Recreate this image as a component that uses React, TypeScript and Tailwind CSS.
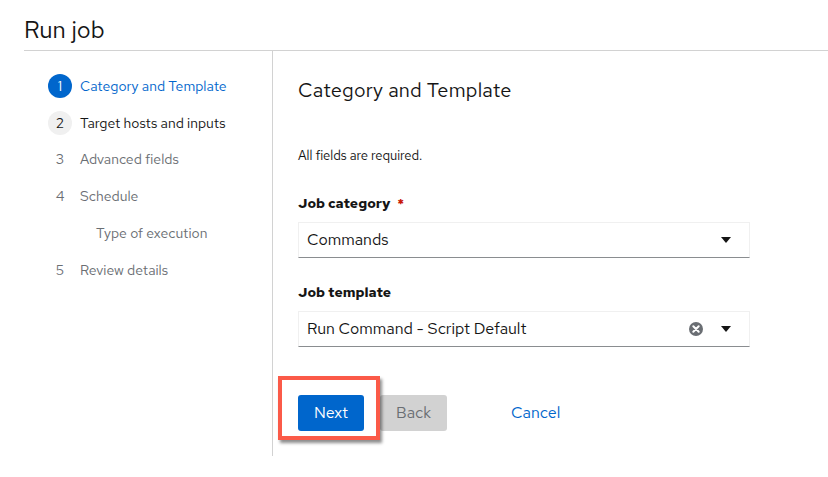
import React from "react";

const steps = [
  { n: "1", label: "Category and Template", state: "current" },
  { n: "2", label: "Target hosts and inputs", state: "next" },
  { n: "3", label: "Advanced fields", state: "disabled" },
  { n: "4", label: "Schedule", state: "disabled" },
  { n: "", label: "Type of execution", state: "sub" },
  { n: "5", label: "Review details", state: "disabled" },
];

function Caret() {
  return (
    <svg width="10" height="6" viewBox="0 0 10 6" className="shrink-0">
      <path d="M0 0h10L5 6z" fill="#151515" />
    </svg>
  );
}

function ClearIcon() {
  return (
    <svg width="14" height="14" viewBox="0 0 14 14" className="shrink-0">
      <circle cx="7" cy="7" r="7" fill="#6a6e73" />
      <path d="M4.3 4.3l5.4 5.4M9.7 4.3l-5.4 5.4" stroke="#fff" strokeWidth="2" strokeLinecap="round" />
    </svg>
  );
}

function Select({ value, clear }: { value: string; clear?: boolean }) {
  return (
    <div className="w-[452px] h-9 flex items-center border border-[#f0f0f0] border-b-[#8a8d90] pl-2 pr-[18px] text-[16px] text-[#151515]">
      <span className="flex-1">{value}</span>
      {clear && <span className="mr-[18px] flex"><ClearIcon /></span>}
      <Caret />
    </div>
  );
}

export default function App() {
  return (
    <div className="w-[828px] h-[477px] bg-white text-[#151515] font-['Red_Hat_Text','Open_Sans',sans-serif]">
      {/* Page title */}
      <div className="h-[50px] pl-6 pt-[14px]">
        <h1 className="text-[24px] leading-8 font-normal">Run job</h1>
      </div>

      <div className="ml-6 border-t border-[#d2d2d2] flex">
        {/* Wizard nav */}
        <nav className="w-[249px] h-[405px] border-r border-[#d2d2d2] pt-[17px] pl-6">
          {steps.map((s) => (
            <div key={s.label} className="h-[36.8px] flex items-center text-[14px]">
              {s.state === "sub" ? (
                <span className="pl-12 text-[#6a6e73]">{s.label}</span>
              ) : (
                <>
                  <span
                    className={
                      "w-6 h-6 rounded-full flex items-center justify-center text-[14px] " +
                      (s.state === "current"
                        ? "bg-[#06c] text-white"
                        : s.state === "next"
                        ? "bg-[#f0f0f0] text-[#151515]"
                        : "text-[#6a6e73]")
                    }
                  >
                    {s.n}
                  </span>
                  <span
                    className={
                      "ml-2 " +
                      (s.state === "current"
                        ? "text-[#06c]"
                        : s.state === "next"
                        ? "text-[#151515]"
                        : "text-[#6a6e73]")
                    }
                  >
                    {s.label}
                  </span>
                </>
              )}
            </div>
          ))}
        </nav>

        {/* Step body */}
        <main className="pl-[25px] pt-[25px]">
          <h2 className="text-[20px] leading-7 font-normal tracking-[0.2px]">Category and Template</h2>
          <p className="mt-[42px] text-[13px] leading-5">All fields are required.</p>

          <label className="block mt-[27px] mb-[9px] text-[14px] leading-5 font-bold">
            Job category <span className="ml-1 text-[#c9190b]">*</span>
          </label>
          <Select value="Commands" />

          <label className="block mt-6 mb-[9px] text-[14px] leading-5 font-bold">Job template</label>
          <Select value="Run Command - Script Default" clear />

          {/* Footer buttons */}
          <div className="relative mt-12 flex items-center">
            <button className="h-9 w-[66px] rounded-[3px] bg-[#06c] text-white text-[16px]">Next</button>
            <button className="ml-4 h-9 w-[67px] rounded-[3px] bg-[#d2d2d2] text-[#6a6e73] text-[16px]">Back</button>
            <button className="ml-12 px-4 h-9 text-[#06c] text-[16px]">Cancel</button>
            {/* annotation highlight */}
            <div className="absolute left-[-20px] top-[-19px] w-[102px] h-[64px] border-4 border-[#fb5a48] shadow-[2px_3px_3px_rgba(0,0,0,0.45)]" />
          </div>
        </main>
      </div>
    </div>
  );
}
